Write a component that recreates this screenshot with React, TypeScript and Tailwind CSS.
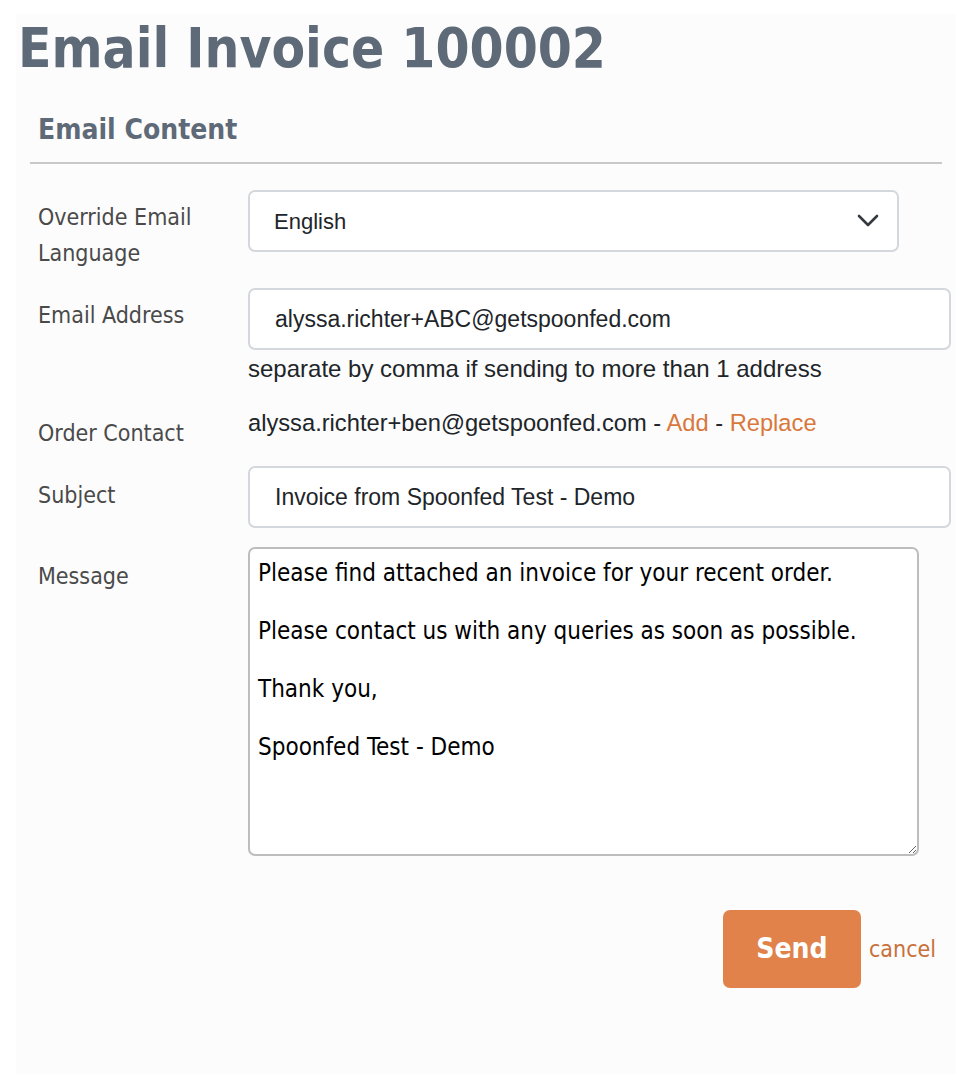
const tahoma = { fontFamily: '"DejaVu Sans Condensed", "DejaVu Sans", sans-serif' };

export default function App() {
  return (
    <div className="min-h-screen bg-white pl-4 pr-[18px] pt-[14px]">
      <div className="min-h-[1060px] bg-[#fcfcfc] pb-10">
        {/* Title */}
        <h1
          className="pl-[2px] pt-[4px] text-[54.5px] leading-[60px] font-bold text-[#5e6a77]"
          style={tahoma}
        >
          Email Invoice 100002
        </h1>

        {/* Section */}
        <h2
          className="mt-[35px] pl-[22px] text-[28px] leading-[34px] font-bold text-[#5e6a77]"
          style={tahoma}
        >
          Email Content
        </h2>
        <div className="mx-[14px] mt-[15px] h-[2px] bg-[#c8c8c8]" />

        <div className="pl-[22px] text-[23px]">
          {/* Language */}
          <div className="mt-[26px] flex items-start">
            <label className="w-[210px] pt-[9px] leading-[36px] text-[#4a4a4a]" style={tahoma}>
              Override Email
              <br />
              Language
            </label>
            <div className="flex h-[62px] w-[651px] items-center justify-between rounded-[7px] border-2 border-[#d4d8dc] bg-white pl-[24px] pr-[18px] font-['Liberation_Sans',sans-serif] text-[22px] text-[#212529]">
              <span>English</span>
              <svg width="22" height="14" viewBox="0 0 22 14" fill="none" className="text-[#343a40]">
                <polyline
                  points="2,2 11,11 20,2"
                  stroke="currentColor"
                  strokeWidth="2.6"
                  strokeLinecap="round"
                  strokeLinejoin="round"
                />
              </svg>
            </div>
          </div>

          {/* Email */}
          <div className="mt-[17px] flex items-start">
            <label className="w-[210px] pt-[9px] leading-[36px] text-[#4a4a4a]" style={tahoma}>
              Email Address
            </label>
            <div>
              <input
                defaultValue="alyssa.richter+ABC@getspoonfed.com"
                className="h-[62px] w-[703px] rounded-[7px] border-2 border-[#d4d8dc] bg-white pl-[25px] font-['Liberation_Sans',sans-serif] text-[23px] text-[#212529] outline-none"
              />
              <p className="mt-[4px] text-[24px] leading-[30px] font-['Liberation_Sans',sans-serif] text-[#212529]">
                separate by comma if sending to more than 1 address
              </p>
            </div>
          </div>

          {/* Order contact */}
          <div className="mt-[24px] flex items-start">
            <label className="w-[210px] pt-[7px] leading-[36px] text-[#4a4a4a]" style={tahoma}>
              Order Contact
            </label>
            <p className="text-[23.7px] leading-[30px] font-['Liberation_Sans',sans-serif] text-[#212529]">
              alyssa.richter+ben@getspoonfed.com -{" "}
              <a href="#" className="text-[#d9783c]">Add</a> -{" "}
              <a href="#" className="text-[#d9783c]">Replace</a>
            </p>
          </div>

          {/* Subject */}
          <div className="mt-[15px] flex items-start">
            <label className="w-[210px] pt-[11px] leading-[36px] text-[#4a4a4a]" style={tahoma}>
              Subject
            </label>
            <input
              defaultValue="Invoice from Spoonfed Test - Demo"
              className="h-[62px] w-[703px] rounded-[7px] border-2 border-[#d4d8dc] bg-white pl-[25px] font-['Liberation_Sans',sans-serif] text-[23px] text-[#212529] outline-none"
            />
          </div>

          {/* Message */}
          <div className="mt-[19px] flex items-start">
            <label className="w-[210px] pt-[11px] leading-[36px] text-[#4a4a4a]" style={tahoma}>
              Message
            </label>
            <textarea
              defaultValue={
                "Please find attached an invoice for your recent order.\n\nPlease contact us with any queries as soon as possible.\n\nThank you,\n\nSpoonfed Test - Demo"
              }
              className="h-[309px] w-[671px] rounded-[7px] border-2 border-[#bdbdbd] bg-white px-[8px] py-[10px] text-[24px] leading-[29px] text-black outline-none"
              style={tahoma}
            />
          </div>
        </div>

        {/* Actions */}
        <div className="mt-[54px] flex items-center justify-end gap-[8px] pr-[20px]">
          <button
            className="h-[78px] w-[138px] rounded-[7px] bg-[#e0824a] text-[28px] font-bold text-white"
            style={tahoma}
          >
            Send
          </button>
          <a href="#" className="text-[23px] text-[#c8703a]" style={tahoma}>
            cancel
          </a>
        </div>
      </div>
    </div>
  );
}
